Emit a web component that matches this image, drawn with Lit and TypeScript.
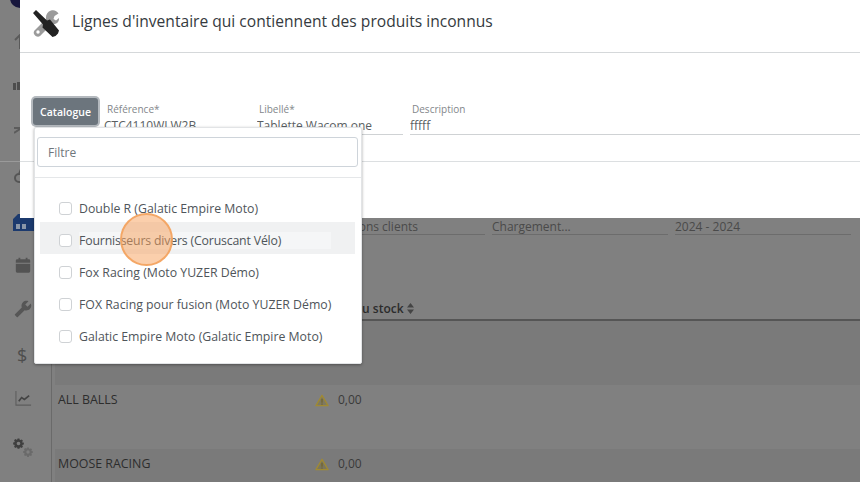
import { LitElement, html, css, svg } from "lit";
import { customElement } from "lit/decorators.js";

const wrench = "M22.7 19l-9.1-9.1c.9-2.3.4-5-1.500-6.900-2-2-5-2.400-7.400-1.300L9 6 6 9 1.600 4.700C.4 7.100.9 10.100 2.900 12.100c1.900 1.900 4.600 2.400 6.900 1.500l9.100 9.100c.4.4 1 .4 1.400 0l2.300-2.300c.5-.4.5-1.100.1-1.400z";

const gear = "M10 1h4l.6 2.700 1.900.8 2.400-1.500 2.800 2.800-1.500 2.400.8 1.900L23.700 10v4l-2.700.6-.8 1.900 1.500 2.400-2.800 2.800-2.400-1.500-1.900.8L14 23.700h-4l-.6-2.700-1.900-.8-2.400 1.500-2.800-2.800 1.500-2.400-.8-1.900L.3 14v-4L3 9.400l.8-1.900L2.300 5.100 5.100 2.300 7.500 3.800l1.900-.8ZM12 8a4 4 0 1 0 0 8 4 4 0 0 0 0-8Z";

const items = [
  "Double R (Galatic Empire Moto)",
  "Fournisseurs divers (Coruscant Vélo)",
  "Fox Racing (Moto YUZER Démo)",
  "FOX Racing pour fusion (Moto YUZER Démo)",
  "Galatic Empire Moto (Galatic Empire Moto)",
];

const warn = svg`<svg class="warn" viewBox="0 0 16 15"><path d="M8 1.500 15 13.500H1Z" fill="rgba(125,112,60,.45)" stroke="currentColor" stroke-width="1.500" stroke-linejoin="round"/><path d="M8 5.500v4.500M8 11v1.400" stroke="#6f6128" stroke-width="1.300"/></svg>`;

@customElement("app-root")
export class AppRoot extends LitElement {
  static styles = css`
    :host { display: block; width: 860px; height: 482px; overflow: hidden; position: relative; background: #808080; font-family: "Open Sans", sans-serif; color: #2b2b2b; }
    .page { display: flex; height: 482px; }
    .side { width: 51px; flex: none; border-right: 1px solid #6a6a6a; position: relative; }
    .avatar { position: absolute; left: 10px; top: -12px; width: 20px; height: 20px; border-radius: 50%; background: #17163c; }
    .sep { position: absolute; left: 0; right: 0; top: 161px; height: 1px; background: #9a9a9a; }
    .ico { position: absolute; color: #4a4a4a; }
    .dollar { position: absolute; left: 17px; top: 344px; font-size: 18px; font-weight: 500; color: #4d4d4d; line-height: 22px; }
    .main { flex: 1; min-width: 0; display: flex; flex-direction: column; padding-top: 218px; }
    .filters { display: flex; gap: 7px; padding-left: 299px; padding-right: 9px; height: 17px; flex: none; }
    .f { font-size: 12px; line-height: 16px; padding-top: 1px; box-sizing: border-box; color: #4a4a4a; border-bottom: 1px solid #6c6c6c; flex: 0 0 176px; white-space: nowrap; }
    .f.first { flex: 0 0 134px; text-align: right; padding-right: 67px; }
    .thead { margin-top: 64px; height: 22px; border-bottom: 2px solid #555; box-sizing: border-box; flex: none; margin-left: 3px; }
    .th { position: absolute; left: 314px; top: 300px; display: flex; align-items: center; gap: 3px; font-size: 12px; font-weight: 600; color: #2c2c2c; white-space: nowrap; }
    .row { flex: none; height: 64px; padding: 7px 0 0 3px; box-sizing: border-box; font-size: 12.4px; line-height: 16px; color: #2d2d2d; position: relative; margin-left: 3px; }
    .row.dark { background: #7a7a7a; }
    .row .v { position: absolute; left: 260px; top: 7px; display: flex; align-items: center; gap: 9px; color: #3a3a3a; font-size: 12px; }
    .warn { width: 14px; height: 13px; color: #a08a33; }

    .modal { position: absolute; left: 20px; right: 0; top: 0; height: 218px; background: #fff; display: flex; flex-direction: column; }
    .mhead { border-bottom: 1px solid #d5d8da; display: flex; align-items: center; gap: 12px; padding-left: 12px; padding-bottom: 10px; flex: none; height: 42px; }
    .mhead svg { width: 28px; height: 28px; flex: none; margin-top: 3px; }
    h1 { margin: 0; font-size: 15.6px; font-weight: 500; color: #353a40; white-space: nowrap; }
    .form { height: 109px; border-bottom: 1px solid #dcdfe1; flex: none; display: flex; padding-top: 45px; box-sizing: border-box; }
    .btn { width: 65px; height: 27px; margin-left: 13px; margin-right: 1px; flex: none; box-sizing: border-box; background: #6c757d; color: #fff; border-radius: 3px; font-size: 10.5px; font-weight: 600; display: flex; align-items: center; justify-content: center; box-shadow: 0 0 0 2px #b4b9be; }
    .field { display: flex; flex-direction: column; box-sizing: border-box; height: 37px; border-bottom: 1px solid #cfd2d4; white-space: nowrap; overflow: hidden; margin-left: 5px; }
    .field label { font-size: 10px; line-height: 14px; color: #83878b; padding-left: 3px; margin-top: 4px; }
    .field.tight label { padding-left: 2px; }
    .field span { font-size: 12px; line-height: 16px; color: #5a5f63; margin-top: 2px; }

    .menu { position: absolute; left: 34px; top: 127px; width: 328px; height: 237px; background: #fff; box-sizing: border-box; border: 1px solid #e2e4e6; border-radius: 2px; box-shadow: 0 1px 3px rgba(0,0,0,.35); display: flex; flex-direction: column; }
    .search { padding: 9px 3px 10px 2px; border-bottom: 1px solid #e5e7e9; flex: none; }
    .input { height: 30px; box-sizing: border-box; border: 1px solid #ced4da; border-radius: 3px; font-size: 12px; line-height: 30px; padding-left: 10px; color: #6f767c; }
    .list { padding: 12px 6px 0 5px; display: flex; flex-direction: column; }
    .item { height: 32px; box-sizing: border-box; padding-top: 4px; display: flex; align-items: center; gap: 7px; padding-left: 19px; font-size: 12.3px; color: #4f555a; white-space: nowrap; }
    .item.hover { background: #f0f1f2; }
    .item.hover span { background: #f5f6f7; padding-right: 50px; letter-spacing: -.17px; }
    .cb { width: 13px; height: 13px; box-sizing: border-box; border: 1px solid #cfd2d5; border-radius: 3px; background: #fff; flex: none; }
    .pulse { position: absolute; left: 120px; top: 213px; width: 53px; height: 53px; box-sizing: border-box; border-radius: 50%; background: rgba(247,160,90,.5); border: 2px solid rgba(243,160,90,.85); }
  `;

  render() {
    return html`
      <div class="page">
        <aside class="side">
          <div class="avatar"></div>
          <svg class="ico" style="top:34px;left:14px" width="8" height="15" viewBox="0 0 8 15"><path fill="none" stroke="#5a5a5a" stroke-width="2" d="M1 6 6 1v14"/></svg>
          <svg class="ico" style="top:82px;left:13px" width="8" height="8" viewBox="0 0 8 8"><path fill="#4d4d4d" d="M0 1h3v7H0ZM4 0h4v8H4Z"/></svg>
          <svg class="ico" style="top:125px;left:14px" width="7" height="9" viewBox="0 0 7 9"><path fill="none" stroke="#5c5c5c" stroke-width="2" d="M0 3h6M0 8l6-4"/></svg>
          <svg class="ico" style="top:168px;left:14px" width="8" height="15" viewBox="0 0 8 15"><path fill="none" stroke="#555" stroke-width="2" d="M8 6H5a4 4 0 0 0 0 8h3M5 6l2-5"/></svg>
          <svg class="ico" style="top:214px;left:13px" width="21" height="17" viewBox="0 0 21 17"><path fill="#1c3a6e" d="M0 5 5 0h3l5 4h8v13H0Z"/><path fill="#8b97a8" d="M3 10h4v5H3ZM9 10h4v5H9Z"/></svg>
          <svg class="ico" style="top:256px;left:14px" width="18" height="18" viewBox="0 0 20 20"><path fill="#535353" d="M2 5a1.500 1.500 0 0 1 1.500-1.500H5V2h2v1.500h6V2h2v1.500h1.500A1.500 1.500 0 0 1 18 5v2.500H2Zm0 3.500h16v8.500a1.500 1.500 0 0 1-1.500 1.500h-13A1.500 1.500 0 0 1 2 17Z"/></svg>
          <svg class="ico" style="top:300px;left:14px;transform:scaleX(-1)" width="18" height="18" viewBox="0 0 24 24"><path fill="#565656" d="${wrench}"/></svg>
          <div class="dollar">$</div>
          <svg class="ico" style="top:390px;left:15px" width="17" height="17" viewBox="0 0 18 18"><path fill="none" stroke="#5c5c5c" stroke-width="1.100" d="M1 1v15h16"/><path fill="none" stroke="#444" stroke-width="1.800" d="M4 12l3-4 3 2 5-4"/></svg>
          <svg class="ico" style="top:438px;left:13px" width="11" height="11" viewBox="0 0 24 24"><path fill="#3f3f3f" fill-rule="evenodd" d="${gear}"/></svg>
          <svg class="ico" style="top:447px;left:23px" width="10" height="10" viewBox="0 0 24 24"><path fill="#6a6a6a" fill-rule="evenodd" d="${gear}"/></svg>
          <div class="sep"></div>
        </aside>
        <main class="main">
          <div class="filters">
            <div class="f first">ons clients</div>
            <div class="f">Chargement...</div>
            <div class="f">2024 - 2024</div>
          </div>
          <div class="thead"></div>
          <div class="row dark"></div>
          <div class="row"><span>ALL BALLS</span><div class="v">${warn}<span>0,00</span></div></div>
          <div class="row dark"><span>MOOSE RACING</span><div class="v">${warn}<span>0,00</span></div></div>
        </main>
      </div>
      <div class="th">
        Valeur du stock
        <svg width="7" height="11" viewBox="0 0 7 11"><path fill="#444" d="M3.500 0 7 4.500H0ZM3.500 11 0 6.500H7Z"/></svg>
      </div>
      <section class="modal">
        <header class="mhead">
          <svg viewBox="0 0 28 28">
            <path fill="#9b9b9b" d="M19 1.500c3-1 6 .3 7.500 3l-4 2.500-1 3 2.500 1.500 3-2.500c.5 4-3 7-7 6L8 27c-2 1.500-5 .2-6-2-.7-1.500 0-3 1-4l11-11c-.5-4 1.500-7.500 5-8.500Z"/>
            <circle cx="6" cy="23" r="1.700" fill="#fff"/>
            <path fill="#222" d="M1 4 4 1l11 10.500 3-1 9 11-1 3-2.500 2.500-3 1-10-9.500 .5-3Z"/>
          </svg>
          <h1>Lignes d'inventaire qui contiennent des produits inconnus</h1>
        </header>
        <div class="form">
          <div class="btn">Catalogue</div>
          <div class="field" style="width:146px"><label>Référence*</label><span>CTC4110WLW2B</span></div>
          <div class="field tight" style="width:146px;margin-left:7px"><label>Libellé*</label><span>Tablette Wacom one</span></div>
          <div class="field tight" style="flex:1;margin-left:7px"><label>Description</label><span>fffff</span></div>
        </div>
      </section>
      <div class="menu">
        <div class="search"><div class="input">Filtre</div></div>
        <div class="list">
          ${items.map((t, i) => html`<div class="item ${i === 1 ? "hover" : ""}"><div class="cb"></div><span>${t}</span></div>`)}
        </div>
      </div>
      <div class="pulse"></div>
    `;
  }
}
